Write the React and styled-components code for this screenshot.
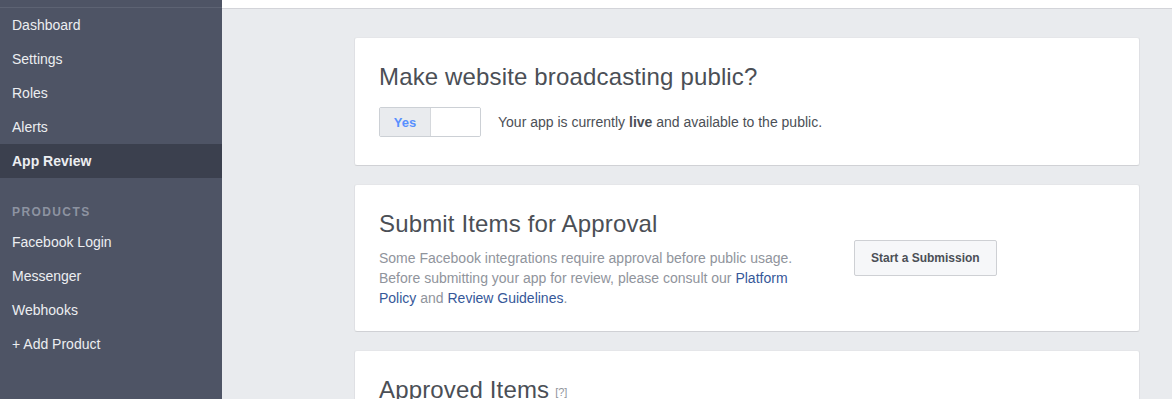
import React from 'react';
import styled, {createGlobalStyle} from 'styled-components';

const GlobalStyle = createGlobalStyle`
  html, body {
    margin: 0;
    padding: 0;
    height: 100%;
    overflow: hidden;
    background: #e9ebee;
    font-family: "Liberation Sans", Arial, Helvetica, sans-serif;
  }
`;

const Page = styled.div`
  display: flex;
  min-height: 100vh;
`;

const Sidebar = styled.nav`
  width: 222px;
  flex-shrink: 0;
  background: #4e5465;
`;

const SideTop = styled.div`
  height: 7px;
  border-bottom: 1px solid #5d6373;
`;

const NavItem = styled.div`
  height: 34px;
  line-height: 34px;
  padding: 0 12px;
  font-size: 14px;
  color: #eceef1;
  font-weight: ${p => (p.$active ? 'bold' : 'normal')};
  background: ${p => (p.$active ? '#3b404e' : 'transparent')};
`;

const NavHeader = styled.div`
  margin: 24px 0 3px;
  padding: 0 12px;
  line-height: 20px;
  font-size: 12px;
  font-weight: bold;
  letter-spacing: 1.4px;
  color: #8d93a1;
  text-transform: uppercase;
`;

const Main = styled.main`
  flex: 1;
  display: flex;
  flex-direction: column;
`;

const TopStrip = styled.div`
  height: 8px;
  background: #fff;
  border-bottom: 1px solid #d3d4d9;
`;

const Content = styled.div`
  display: flex;
  flex-direction: column;
  gap: 18px;
  padding: 28px 32px 0 132px;
`;

const Card = styled.section`
  background: #fff;
  border: 1px solid;
  border-color: #e5e6e9 #dfe0e4 #d0d1d5;
  border-radius: 3px;
  padding: 25px 24px ${p => p.$bottom || 24}px;
`;

const Title = styled.h2`
  margin: 0;
  font-size: 24px;
  line-height: 28px;
  font-weight: normal;
  letter-spacing: 0.15px;
  color: #4b4f56;
`;

const Help = styled.span`
  margin-left: 6px;
  font-size: 11px;
  letter-spacing: 0;
  color: #90949c;
  vertical-align: 2px;
`;

const ToggleRow = styled.div`
  display: flex;
  align-items: center;
  margin-top: 16px;
  gap: 17px;
`;

const Toggle = styled.div`
  display: flex;
  width: 100px;
  height: 28px;
  border: 1px solid #ccd0d5;
  border-radius: 2px;
  overflow: hidden;
`;

const ToggleOption = styled.div`
  flex: ${p => (p.$on ? '0 0 50px' : '1')};
  display: flex;
  align-items: center;
  justify-content: center;
  background: ${p => (p.$on ? '#e9ebee' : '#fff')};
  border-right: ${p => (p.$on ? '1px solid #d5d8dc' : 'none')};
  color: #5890ff;
  font-size: 13px;
  font-weight: bold;
`;

const Status = styled.p`
  margin: 0;
  font-size: 14px;
  color: #4b4f56;

  b {
    font-weight: bold;
  }
`;

const SubmitRow = styled.div`
  display: grid;
  grid-template-columns: 445px auto;
  column-gap: 30px;
  align-items: start;
`;

const Desc = styled.p`
  margin: 10px 0 0;
  font-size: 14px;
  line-height: 20px;
  color: #90949c;

  a {
    color: #365899;
    text-decoration: none;
  }
`;

const Button = styled.button`
  justify-self: start;
  margin-top: 2px;
  height: 36px;
  padding: 0 16px;
  background: #f6f7f9;
  border: 1px solid #ced0d4;
  border-radius: 2px;
  font-family: inherit;
  font-size: 12px;
  font-weight: bold;
  color: #4b4f56;
`;

const navItems = ['Dashboard', 'Settings', 'Roles', 'Alerts', 'App Review'];
const productItems = ['Facebook Login', 'Messenger', 'Webhooks', '+ Add Product'];

export default function App() {
  return (
    <>
      <GlobalStyle />
      <Page>
        <Sidebar>
          <SideTop />
          {navItems.map(item => (
            <NavItem key={item} $active={item === 'App Review'}>{item}</NavItem>
          ))}
          <NavHeader>Products</NavHeader>
          {productItems.map(item => (
            <NavItem key={item}>{item}</NavItem>
          ))}
        </Sidebar>
        <Main>
          <TopStrip />
          <Content>
            <Card $bottom={28}>
              <Title>Make website broadcasting public?</Title>
              <ToggleRow>
                <Toggle>
                  <ToggleOption $on>Yes</ToggleOption>
                  <ToggleOption />
                </Toggle>
                <Status>Your app is currently <b>live</b> and available to the public.</Status>
              </ToggleRow>
            </Card>
            <Card $bottom={23}>
              <Title>Submit Items for Approval</Title>
              <SubmitRow>
                <Desc>
                  Some Facebook integrations require approval before public usage.
                  Before submitting your app for review, please consult our{' '}
                  <a href="#">Platform Policy</a> and <a href="#">Review Guidelines</a>.
                </Desc>
                <Button>Start a Submission</Button>
              </SubmitRow>
            </Card>
            <Card>
              <Title>Approved Items<Help>[?]</Help></Title>
            </Card>
          </Content>
        </Main>
      </Page>
    </>
  );
}
